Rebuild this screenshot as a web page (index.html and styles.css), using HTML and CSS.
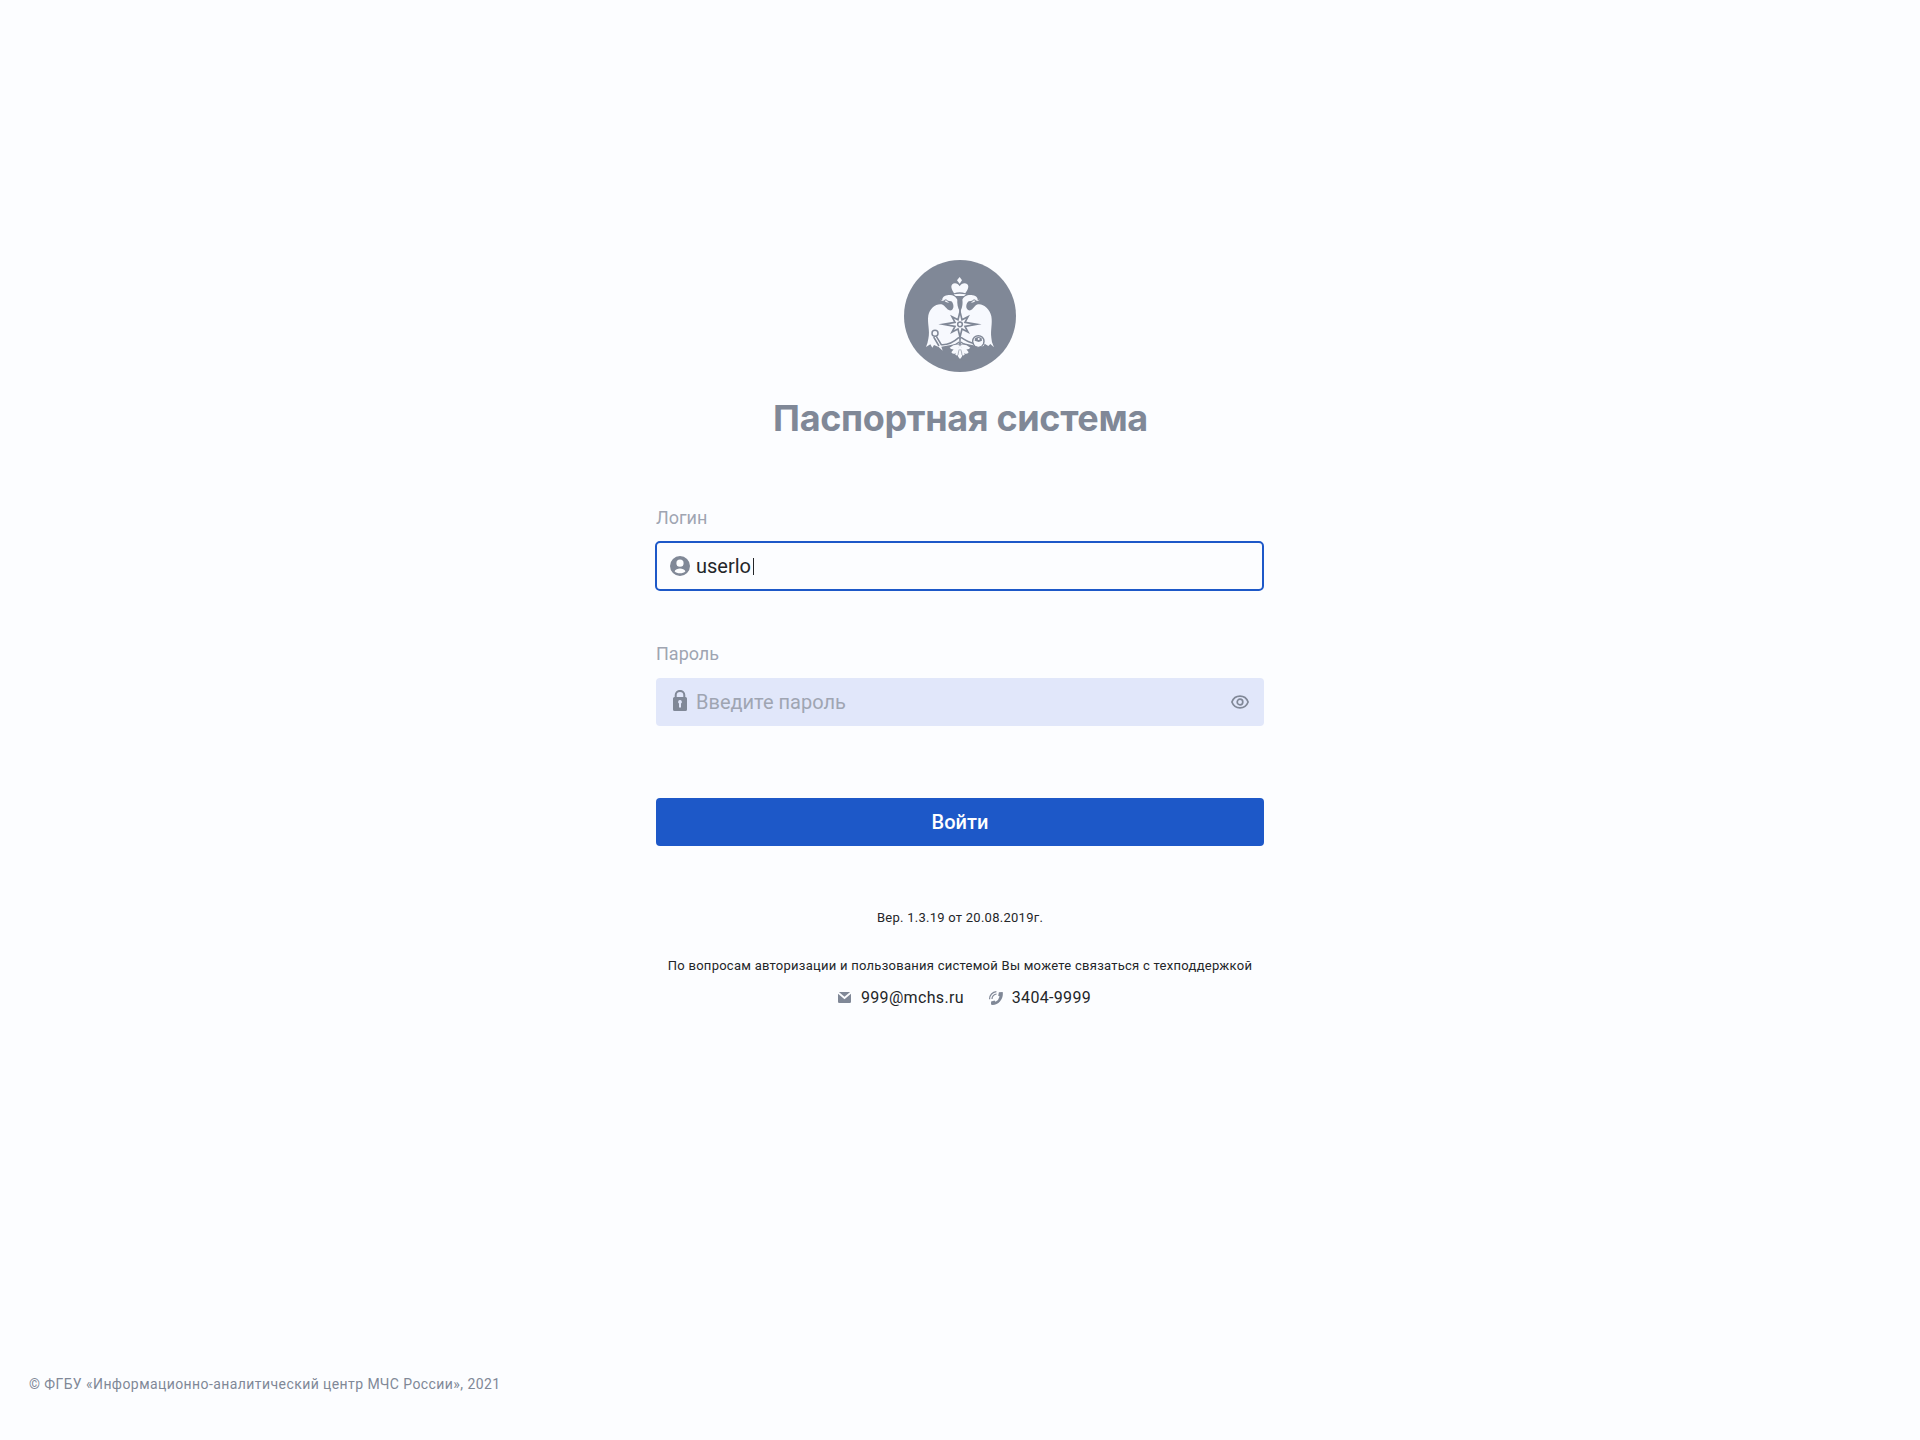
FILE: index.html
```html
<!DOCTYPE html>
<html lang="ru">
<head>
<meta charset="utf-8">
<title>Паспортная система</title>
<link rel="stylesheet" href="styles.css">
</head>
<body>
<div class="page">
  <main class="login">
    <svg class="emblem" viewBox="42 30 336 336" aria-hidden="true">
      <circle class="emblem-disc" cx="210" cy="198" r="168"/>
      <g class="emblem-light">
        <path d="M209 81L216 91L209 101L201 91Z"/>
        <path d="M209 109C204 99 192 98 187 103C180 110 187 121 192 130Q209 124 226 130C232 121 239 110 232 103C226 98 214 99 209 109Z"/>
        <path d="M191 133Q209 129 228 133L222 138H197Z"/>
        <path d="M210 184C203 175 201 159 202 149C197 138 184 132 172 136C160 138 156 145 157 152L168 148Q172 154 184 154C193 162 192 178 184 181C172 183 169 170 158 164C140 159 120 174 115 196C111 220 121 243 115 266Q113 280 108 291L121 283L127 293L132 285L146 291L158 302L154 290L182 285L200 281L210 286L222 280L250 286L263 292L281 288L284 281L295 288L301 282L312 292Q304 276 304 263C301 240 308 221 304 199C299 175 277 158 260 164C250 170 247 183 236 181C226 177 227 161 236 154Q248 154 252 148L263 152C264 144 260 138 248 136C235 132 221 139 217 149C219 159 217 176 210 184Z"/>
        <path d="M150 149L161 151Q168 159 177 158L168 151Q162 155 150 149ZM270 149L259 151Q252 159 243 158L252 151Q259 155 270 149Z"/>
        <path d="M210 141L216 149L210 157L203 149Z" class="emblem-dark"/>
      </g>
      <g class="emblem-lines">
        <path d="M210 157V190M210 262V286M139 259L154 284Q180 286 207 262M213 262Q235 277 254 281"/>
        <path d="M131 261L147 288M158 293Q184 294 208 276M212 276Q232 290 250 291"/>
        <circle cx="135" cy="250" r="9"/>
        <circle cx="265" cy="274" r="17"/>
      </g>
      <circle class="emblem-light" cx="265" cy="276" r="14"/>
      <path class="emblem-dark" d="M255 265Q265 257 275 265L276 272L266 276L254 272Z"/>
      <circle class="emblem-light" cx="266" cy="267" r="3"/>
      <path class="emblem-star" d="M210 185L216 209L234 200L225 217L260 223L225 229L234 246L216 237L210 261L204 237L186 246L195 229L160 223L195 217L186 200L204 209Z"/>
      <circle class="emblem-lines" cx="210" cy="223" r="7"/>
      <path class="emblem-dark" d="M168 295Q190 292 209 279Q230 292 252 295V332H168Z"/>
      <g class="emblem-light">
        <path d="M209 284Q192 281 179 293Q184 300 194 298Q203 293 209 284ZM208 287Q191 295 184 307Q190 315 198 309Q205 300 208 287ZM211 284Q228 281 241 293Q236 300 226 298Q217 293 211 284ZM212 287Q229 295 236 307Q230 315 222 309Q215 300 212 287Z"/>
        <path d="M210 285Q198 303 196 314Q201 318 203 315Q204 323 210 327Q216 323 217 315Q219 318 224 314Q222 303 210 285Z"/>
      </g>
      <path class="emblem-feather" d="M208 298Q205 305 204 315M212 298Q215 305 216 315"/>
    </svg>
    <h1 class="title">Паспортная система</h1>
    <form class="form">
      <div class="label">Логин</div>
      <div class="field field-active">
        <svg class="icon-user" viewBox="0 0 20 20" aria-hidden="true"><path fill-rule="evenodd" d="M10 0A10 10 0 1 1 10 20A10 10 0 0 1 10 0ZM10 3.6A3.6 3.6 0 1 0 10 10.8A3.6 3.6 0 0 0 10 3.6ZM4.6 15.2C6.7 17.9 13.3 17.9 15.4 15.2C13.8 11.6 6.2 11.6 4.6 15.2Z"/></svg>
        <span class="value">userlo<span class="caret"></span></span>
      </div>
      <div class="label label-password">Пароль</div>
      <div class="field field-idle">
        <svg class="icon-lock" viewBox="0 0 14 21" aria-hidden="true"><path class="lock-loop" d="M2.7 9V5.1C2.7-.5 11.3-.5 11.3 5.1V9"/><path fill-rule="evenodd" d="M1.5 7H12.5Q14 7 14 8.5V19.5Q14 21 12.5 21H1.5Q0 21 0 19.5V8.5Q0 7 1.5 7ZM7 10A1.9 1.9 0 0 0 6 13.5V17.5H8V13.5A1.9 1.9 0 0 0 7 10Z"/></svg>
        <span class="placeholder">Введите пароль</span>
        <svg class="icon-eye" viewBox="0 0 18 14" aria-hidden="true"><path d="M.9 7C3.8-.8 14.2-.8 17.1 7C14.2 14.8 3.8 14.8.9 7Z"/><circle cx="9" cy="7" r="2.8"/></svg>
      </div>
      <button class="submit" type="button">Войти</button>
    </form>
    <p class="note version">Вер. 1.3.19 от 20.08.2019г.</p>
    <p class="note support">По вопросам авторизации и пользования системой Вы можете связаться с техподдержкой</p>
    <div class="contacts">
      <svg class="icon-mail" viewBox="0 0 13 11" aria-hidden="true"><path d="M0 1.7L6.5 7.2L13 1.7V9.8Q13 11 11.8 11H1.2Q0 11 0 9.8ZM.9 0H12.1L6.5 4.7Z"/></svg>
      <span class="mail">999@mchs.ru</span>
      <svg class="icon-phone" viewBox="0 0 14 14" aria-hidden="true"><path d="M9.9 1.3L13.7 1.1C14.8 7.2 10.3 13.8 3.5 14L2 13.6L2.1 10.5L5.6 9.6L6.5 10.8Q9.8 9 10.6 5.5L9.2 4.7Z"/><path class="wave" d="M.6 8.3C.5 4 3.5 1 7.4.7M3 8.1C2.9 5.4 5 3.1 7.6 3"/></svg>
      <span class="phone">3404-9999</span>
    </div>
  </main>
  <footer class="footer">© ФГБУ «Информационно-аналитический центр МЧС России», 2021</footer>
</div>
</body>
</html>
```
FILE: styles.css
```css
* { box-sizing: border-box; }
body {
  margin: 0;
  background: #fcfdff;
  color: #242629;
  font-family: Roboto, "Noto Sans", sans-serif;
}
svg { flex: none; }
.page {
  display: flex;
  flex-direction: column;
  justify-content: space-between;
  height: 1440px;
  padding: 260px 0 44px;
}
.login {
  display: flex;
  flex-direction: column;
  align-items: center;
}
.emblem { display: block; width: 112px; height: 112px; }
.emblem-disc, .emblem-dark { fill: #808897; }
.emblem-light { fill: #f7f9fe; }
.emblem-lines { fill: none; stroke: #808897; stroke-width: 4.5; }
.emblem-star { fill: #f7f9fe; stroke: #808897; stroke-width: 5; stroke-miterlimit: 12; }
.emblem-feather { fill: none; stroke: #808897; stroke-width: 2; }
.title {
  margin: 23px 0 0 1px;
  color: #808897;
  font: 700 36px/46px Inter, sans-serif;
  letter-spacing: -0.34px;
  white-space: nowrap;
}
.form { width: 608px; margin-top: 65px; }
.label {
  height: 24px;
  color: #9fa5b2;
  font-size: 18px;
  line-height: 24px;
}
.label-password { margin-top: 52px; }
.field {
  display: flex;
  align-items: center;
  height: 48px;
  margin-top: 12px;
  padding: 0 15px 0 14px;
  border-radius: 4px;
  font-size: 20px;
  line-height: 24px;
}
.field-active {
  margin-right: 1px;
  outline: 2px solid #1d58c8;
  outline-offset: -1px;
}
.field-idle { background: #e1e7fa; }
.icon-user { width: 20px; height: 20px; fill: #808897; }
.value { display: flex; align-items: center; margin-left: 6px; }
.caret { width: 1px; height: 17px; margin-left: 2px; background: #242629; }
.icon-lock { width: 14px; height: 21px; margin: -3px 0 0 3px; fill: #808897; }
.icon-lock .lock-loop { fill: none; stroke: #808897; stroke-width: 2; }
.placeholder { flex: 1; margin-left: 9px; color: #9fa5b2; }
.icon-eye { width: 18px; height: 14px; fill: none; stroke: #808897; stroke-width: 1.7; }
.submit {
  display: block;
  width: 100%;
  height: 48px;
  margin-top: 72px;
  padding: 0;
  border: 0;
  border-radius: 4px;
  background: #1d58c8;
  color: #fff;
  font: 500 20px/24px Roboto, "Noto Sans", sans-serif;
}
.note {
  margin: 0;
  font-size: 13px;
  line-height: 16px;
  letter-spacing: 0.26px;
  white-space: nowrap;
}
.version { margin-top: 64px; }
.support { margin-top: 32px; }
.contacts {
  display: flex;
  align-items: center;
  width: 252px;
  height: 24px;
  margin: 12px 0 0 8px;
  font-size: 16px;
  line-height: 24px;
  letter-spacing: 0.32px;
  white-space: nowrap;
}
.icon-mail { width: 13px; height: 11px; margin-bottom: 1px; fill: #808897; }
.mail { margin-left: 10px; }
.icon-phone { width: 14px; height: 14px; margin-left: 25px; fill: #808897; }
.icon-phone .wave { fill: none; stroke: #808897; stroke-width: 1.2; }
.phone { margin-left: 9px; }
.footer {
  padding-left: 29px;
  color: #808897;
  font-size: 14px;
  line-height: 24px;
  letter-spacing: 0.42px;
}
```
